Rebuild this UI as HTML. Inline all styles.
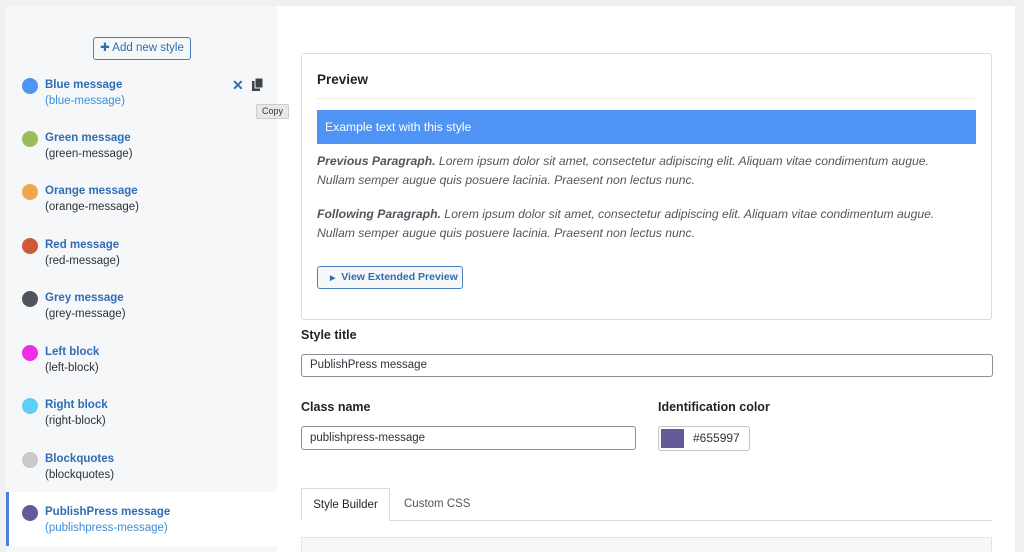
<!DOCTYPE html>
<html><head><style>
*{box-sizing:border-box;margin:0;padding:0}
html,body{width:1024px;height:552px;overflow:hidden}
body{background:#f0f0f1;font-family:"Liberation Sans",sans-serif;position:relative;font-size:11px}
.side{position:absolute;left:6px;top:6px;width:271px;height:546px;background:#f6f7f9}
.main{position:absolute;left:277px;top:6px;width:738px;height:546px;background:#fff}
.add{position:absolute;left:87px;top:31px;width:98px;height:23px;border:1px solid #4a7fc1;border-radius:3px;background:#f6f7f7;color:#2f6db5;font-size:11.5px;line-height:21px;text-align:center}
.item{position:absolute;left:0;width:271px;height:53px}
.item .dot{position:absolute;left:16px;top:-8px;width:16px;height:16px;border-radius:50%}
.item .t{position:absolute;left:39px;top:-7px;font-weight:bold;color:#2f6db5;font-size:11.5px}
.item .s{position:absolute;left:39px;top:9px;color:#2c3338;font-size:11.5px}
.abs{position:absolute}
.box{position:absolute;left:301px;top:53px;width:691px;height:267px;border:1px solid #dcdcde;border-radius:3px;background:#fff}
p.l{position:absolute;left:317px;font-style:italic;color:#50575e;font-size:12.2px;line-height:19px}
.lbl{position:absolute;font-weight:bold;font-size:12.5px;color:#1d2327}
.inp{position:absolute;border:1px solid #8c8f94;border-radius:3px;background:#fff;font-size:11.5px;color:#2c3338;padding-left:8px}
</style></head><body>
<div class="side">
<div class="add">✚ Add new style</div>
</div>
<div class="main"></div>
<div class="abs" style="left:6px;top:492px;width:271px;height:54px;background:#fff;border-left:3px solid #4a7fd8"></div>
<div class="abs" style="left:6px;top:2px">
<div class="item" style="top:84px"><div class="dot" style="background:#4f94f5"></div><div class="t">Blue message</div><div class="s" style="color:#3b8ed8">(blue-message)</div></div>
<div class="item" style="top:137px"><div class="dot" style="background:#97be5a"></div><div class="t">Green message</div><div class="s">(green-message)</div></div>
<div class="item" style="top:190px"><div class="dot" style="background:#eea84b"></div><div class="t">Orange message</div><div class="s">(orange-message)</div></div>
<div class="item" style="top:244px"><div class="dot" style="background:#cf5a3b"></div><div class="t">Red message</div><div class="s">(red-message)</div></div>
<div class="item" style="top:297px"><div class="dot" style="background:#50545e"></div><div class="t">Grey message</div><div class="s">(grey-message)</div></div>
<div class="item" style="top:351px"><div class="dot" style="background:#f02ce6"></div><div class="t">Left block</div><div class="s">(left-block)</div></div>
<div class="item" style="top:404px"><div class="dot" style="background:#5ed0f7"></div><div class="t">Right block</div><div class="s">(right-block)</div></div>
<div class="item" style="top:458px"><div class="dot" style="background:#c8cacc"></div><div class="t">Blockquotes</div><div class="s">(blockquotes)</div></div>
<div class="item" style="top:511px"><div class="dot" style="background:#655997"></div><div class="t">PublishPress message</div><div class="s" style="color:#3b8ed8">(publishpress-message)</div></div>
</div>
<div class="abs" style="left:232px;top:77px;color:#2f6db5;font-weight:bold;font-size:14px">✕</div>
<svg class="abs" style="left:252px;top:78px" width="12" height="13" viewBox="0 0 12 13"><rect x="0" y="3" width="8" height="10" fill="#3c434a"/><rect x="3" y="0" width="8" height="10" fill="#3c434a" stroke="#f6f7f9" stroke-width="1"/></svg>
<div class="abs" style="left:256px;top:104px;width:33px;height:15px;background:#e8e8e8;border:1px solid #ccc;border-radius:2px;font-size:9px;line-height:13px;text-align:center;color:#333">Copy</div>
<div class="box"></div>
<div class="abs" style="left:317px;top:72px;font-weight:bold;font-size:13.5px;color:#1d2327">Preview</div>
<div class="abs" style="left:317px;top:98px;width:658px;height:1px;background:#eee"></div>
<div class="abs" style="left:317px;top:110px;width:659px;height:34px;background:#4f94f5;color:#fff;font-size:12.2px;line-height:34px;padding-left:8px">Example text with this style</div>
<p class="l" style="top:152px"><b>Previous Paragraph.</b> Lorem ipsum dolor sit amet, consectetur adipiscing elit. Aliquam vitae condimentum augue.<br>Nullam semper augue quis posuere lacinia. Praesent non lectus nunc.</p>
<p class="l" style="top:205px"><b>Following Paragraph.</b> Lorem ipsum dolor sit amet, consectetur adipiscing elit. Aliquam vitae condimentum augue.<br>Nullam semper augue quis posuere lacinia. Praesent non lectus nunc.</p>
<div class="abs" style="left:317px;top:266px;width:146px;height:23px;border:1px solid #4a7fc1;border-radius:3px;background:#f6f7f7;color:#2f6db5;font-weight:bold;font-size:10.5px;line-height:21px;padding-left:12px"><span style="font-size:7px">▶</span>&nbsp; View Extended Preview</div>
<div class="lbl" style="left:301px;top:328px">Style title</div>
<div class="inp" style="left:301px;top:354px;width:692px;height:23px;line-height:21px">PublishPress message</div>
<div class="lbl" style="left:301px;top:400px">Class name</div>
<div class="lbl" style="left:658px;top:400px">Identification color</div>
<div class="inp" style="left:301px;top:426px;width:335px;height:24px;line-height:22px">publishpress-message</div>
<div class="inp" style="left:658px;top:426px;width:92px;height:25px;line-height:23px;padding-left:0;border-color:#c3c4c7"><span class="abs" style="left:2px;top:2px;width:23px;height:19px;background:#655997"></span><span style="position:absolute;left:34px;font-size:12px">#655997</span></div>
<div class="abs" style="left:301px;top:520px;width:691px;height:1px;background:#dcdcde"></div>
<div class="abs" style="left:301px;top:488px;width:89px;height:33px;background:#fff;border:1px solid #dcdcde;border-bottom:none;font-size:11.5px;line-height:33px;text-align:center;color:#1d2327">Style Builder</div>
<div class="abs" style="left:404px;top:488px;font-size:11.5px;line-height:33px;color:#50575e">Custom CSS</div>
<div class="abs" style="left:301px;top:537px;width:691px;height:20px;background:#f6f7f7;border:1px solid #e5e5e5"></div>
</body></html>
